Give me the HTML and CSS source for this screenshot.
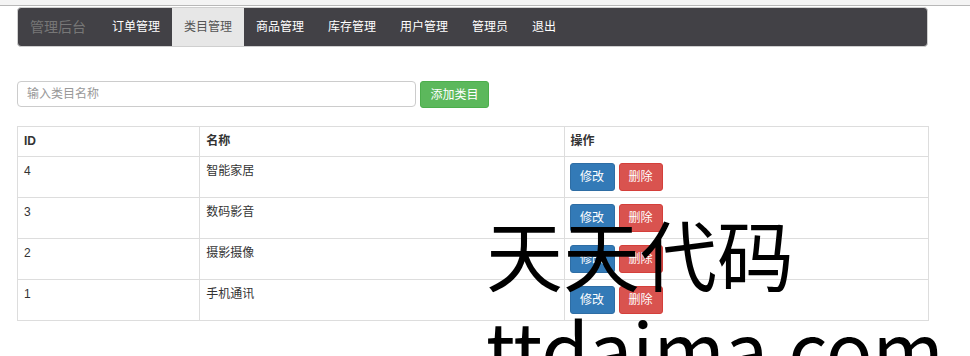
FILE: index.html
```html
<!DOCTYPE html>
<html lang="zh-CN">
<head>
  <meta charset="UTF-8">
  <title>类目管理</title>
  <link rel="stylesheet" href="styles.css">
</head>
<body>
  <div class="topline"></div>
  <div class="page">
    <div class="navbar">
      <span class="brand">管理后台</span>
      <a class="nav-item" href="#">订单管理</a>
      <a class="nav-item active" href="#">类目管理</a>
      <a class="nav-item" href="#">商品管理</a>
      <a class="nav-item" href="#">库存管理</a>
      <a class="nav-item" href="#">用户管理</a>
      <a class="nav-item" href="#">管理员</a>
      <a class="nav-item" href="#">退出</a>
    </div>

    <div class="add-form">
      <input class="add-input" type="text" placeholder="输入类目名称">
      <button class="btn btn-success">添加类目</button>
    </div>

    <table class="list">
      <thead>
        <tr>
          <th class="col-id">ID</th>
          <th class="col-name">名称</th>
          <th class="col-op">操作</th>
        </tr>
      </thead>
      <tbody>
        <tr>
          <td>4</td>
          <td>智能家居</td>
          <td class="op-cell"><div class="ops"><button class="btn btn-primary">修改</button><button class="btn btn-danger">删除</button></div></td>
        </tr>
        <tr>
          <td>3</td>
          <td>数码影音</td>
          <td class="op-cell"><div class="ops"><button class="btn btn-primary">修改</button><button class="btn btn-danger">删除</button></div></td>
        </tr>
        <tr>
          <td>2</td>
          <td>摄影摄像</td>
          <td class="op-cell"><div class="ops"><button class="btn btn-primary">修改</button><button class="btn btn-danger">删除</button></div></td>
        </tr>
        <tr>
          <td>1</td>
          <td>手机通讯</td>
          <td class="op-cell"><div class="ops"><button class="btn btn-primary">修改</button><button class="btn btn-danger">删除</button></div></td>
        </tr>
      </tbody>
    </table>
  </div>

  <!-- 水印 -->
  <div class="watermark">天天代码<br>ttdaima.com</div>
</body>
</html>
```

FILE: styles.css
```css
body {
  margin: 0;
  font-family: "Liberation Sans", "Noto Sans CJK SC", sans-serif;
  font-size: 12px;
  color: #333;
  background: #fff;
  overflow: hidden;
}

.topline {
  height: 5px;
  background: #f4f4f4;
  border-bottom: 1px solid #b8b8b8;
}

.page {
  width: 912px;
  margin-left: 17px;
}

/* 导航 */
.navbar {
  display: flex;
  height: 38px;
  width: 909px;
  margin-top: 1px;
  background: #424146;
  border: 1px solid #cfcfcf;
  border-radius: 4px;
  overflow: hidden;
}
.brand {
  padding: 0 14px 0 12px;
  font-size: 14px;
  line-height: 38px;
  color: #777;
}
.nav-item {
  padding: 0 12px;
  line-height: 38px;
  color: #fff;
  text-decoration: none;
}
.nav-item.active {
  background: #e7e7e7;
  color: #555;
}

/* 添加表单 */
.add-form {
  display: flex;
  gap: 4px;
  margin-top: 34px;
}
.add-input {
  box-sizing: border-box;
  width: 399px;
  height: 26px;
  padding: 0 9px;
  border: 1px solid #ccc;
  border-radius: 4px;
  font-family: inherit;
  font-size: 12px;
  color: #555;
}
.add-input::placeholder {
  color: #999;
}

.btn {
  box-sizing: border-box;
  padding: 5px 0;
  border: 1px solid transparent;
  border-radius: 3px;
  font-family: inherit;
  font-size: 12px;
  line-height: 16px;
  color: #fff;
  cursor: pointer;
}
.btn-success {
  width: 69px;
  height: 27px;
  padding: 0;
  background: #5cb85c;
  border-color: #4cae4c;
}
.btn-primary {
  width: 45px;
  background: #337ab7;
  border-color: #2e6da4;
}
.btn-danger {
  width: 44px;
  background: #d9534f;
  border-color: #d43f3a;
}

/* 列表 */
.list {
  width: 912px;
  margin-top: 18px;
  border-collapse: collapse;
  border: 1px solid #ddd;
}
.list th,
.list td {
  padding: 6px;
  line-height: 17px;
  text-align: left;
  vertical-align: top;
  border: 1px solid #ddd;
}
.list .op-cell {
  padding-left: 5px;
}
.list th {
  font-weight: bold;
}
.col-id { width: 20%; }
.col-name { width: 40%; }
.col-op { width: 40%; }

.ops {
  display: flex;
  gap: 4px;
}

.watermark {
  position: absolute;
  left: 486px;
  top: 206px;
  font-family: "Noto Sans CJK SC", sans-serif;
  font-size: 77px;
  line-height: 94px;
  color: #000;
  pointer-events: none;
}
```
